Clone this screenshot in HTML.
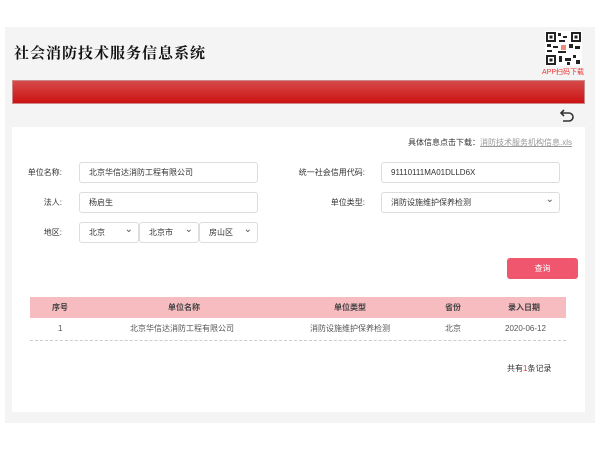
<!DOCTYPE html>
<html><head><meta charset="utf-8"><style>
*{margin:0;padding:0;box-sizing:border-box}
body{width:600px;height:451px;background:#fff;font-family:"Liberation Sans","Noto Sans CJK SC",sans-serif;font-size:8px;color:#333;position:relative;overflow:hidden}
.abs{position:absolute}
.outer{left:5px;top:27px;width:590px;height:396px;background:#f4f4f4}
.title{left:14px;top:42px;font-family:"Noto Serif CJK SC",serif;font-weight:bold;font-size:15px;color:#111;letter-spacing:1px}
.bar{left:12px;top:80px;width:573px;height:24px;background:linear-gradient(#d64a4a,#cc1111);border:1px solid #c88}
.panel{left:12px;top:127px;width:573px;height:285px;background:#fff}
.inp{background:#fff;border:1px solid #ddd;border-radius:3px;height:21px;padding-left:9px;line-height:19px;font-size:8px;color:#333}
.lbl{font-size:8px;color:#333;text-align:right}
.sel:after{content:"⌄";position:absolute;right:5px;top:-3px;font-size:10px;color:#555}
th,td{font-size:8px;text-align:center}
</style></head><body>
<div class="abs outer"></div>
<div class="abs title">社会消防技术服务信息系统</div>
<svg class="abs" style="left:545px;top:31px" width="37" height="35" viewBox="0 0 37 35">
<rect width="37" height="35" fill="#fff"/>
<g fill="#222">
<rect x="1" y="1" width="10" height="10"/><rect x="26" y="1" width="10" height="10"/><rect x="1" y="24" width="10" height="10"/>
</g>
<g fill="#fff"><rect x="3" y="3" width="6" height="6"/><rect x="28" y="3" width="6" height="6"/><rect x="3" y="26" width="6" height="6"/></g>
<g fill="#222"><rect x="4.5" y="4.5" width="3" height="3"/><rect x="29.5" y="4.5" width="3" height="3"/><rect x="4.5" y="27.5" width="3" height="3"/>
<rect x="13" y="2" width="3" height="3"/><rect x="18" y="5" width="4" height="2"/><rect x="14" y="9" width="6" height="2"/><rect x="2" y="13" width="4" height="3"/><rect x="8" y="15" width="5" height="2"/><rect x="13" y="20" width="8" height="2"/><rect x="24" y="13" width="4" height="4"/><rect x="30" y="15" width="5" height="3"/><rect x="14" y="25" width="3" height="6"/><rect x="20" y="27" width="6" height="3"/><rect x="28" y="24" width="3" height="3"/><rect x="31" y="29" width="4" height="4"/><rect x="2" y="19" width="5" height="2"/><rect x="22" y="31" width="3" height="3"/></g>
<rect x="16" y="14" width="5" height="5" fill="#f08a7a"/>
</svg>
<div class="abs" style="left:542px;top:67px;font-size:7px;color:#e33">APP扫码下载</div>
<div class="abs bar"></div>
<svg class="abs" style="left:559px;top:108px" width="16" height="14" viewBox="0 0 16 14"><path d="M5 2 L2 5 L5 8 M2 5 H10 A4 4 0 0 1 10 13 H4" fill="none" stroke="#333" stroke-width="1.6"/></svg>
<div class="abs panel"></div>
<div class="abs" style="right:28px;top:137px;font-size:8px;color:#333">具体信息点击下载：<span style="color:#999;text-decoration:underline">消防技术服务机构信息.xls</span></div>

<div class="abs lbl" style="left:20px;top:167px;width:42px">单位名称:</div>
<div class="abs inp" style="left:79px;top:162px;width:179px">北京华信达消防工程有限公司</div>
<div class="abs lbl" style="left:280px;top:167px;width:85px">统一社会信用代码:</div>
<div class="abs inp" style="left:381px;top:162px;width:179px">91110111MA01DLLD6X</div>

<div class="abs lbl" style="left:20px;top:197px;width:42px">法人:</div>
<div class="abs inp" style="left:79px;top:192px;width:179px">杨启生</div>
<div class="abs lbl" style="left:280px;top:197px;width:85px">单位类型:</div>
<div class="abs inp sel" style="left:381px;top:192px;width:179px">消防设施维护保养检测</div>

<div class="abs lbl" style="left:20px;top:227px;width:42px">地区:</div>
<div class="abs inp sel" style="left:79px;top:222px;width:60px">北京</div>
<div class="abs inp sel" style="left:139px;top:222px;width:60px">北京市</div>
<div class="abs inp sel" style="left:199px;top:222px;width:59px">房山区</div>

<div class="abs" style="left:507px;top:258px;width:71px;height:21px;background:#f0566e;border-radius:3px;color:#fff;text-align:center;line-height:21px;font-size:8px">查询</div>

<div class="abs" style="left:30px;top:297px;width:536px;height:21px;background:#f7bcc0"></div>
<div class="abs" style="left:30px;top:340px;width:536px;border-top:1px dashed #ccc"></div>
<div class="abs" style="left:30px;top:297px;width:536px;font-size:8px">
<div style="position:relative;height:21px;line-height:21px;font-weight:bold;color:#444">
<span class="abs" style="left:22px">序号</span><span class="abs" style="left:138px">单位名称</span><span class="abs" style="left:304px">单位类型</span><span class="abs" style="left:415px">省份</span><span class="abs" style="left:478px">录入日期</span></div>
<div style="position:relative;height:21px;line-height:21px;color:#555">
<span class="abs" style="left:28px">1</span><span class="abs" style="left:100px">北京华信达消防工程有限公司</span><span class="abs" style="left:280px">消防设施维护保养检测</span><span class="abs" style="left:415px">北京</span><span class="abs" style="left:475px">2020-06-12</span></div>
</div>
<div class="abs" style="left:507px;top:363px;font-size:8px;color:#333">共有<span style="color:#e33">1</span>条记录</div>
</body></html>
